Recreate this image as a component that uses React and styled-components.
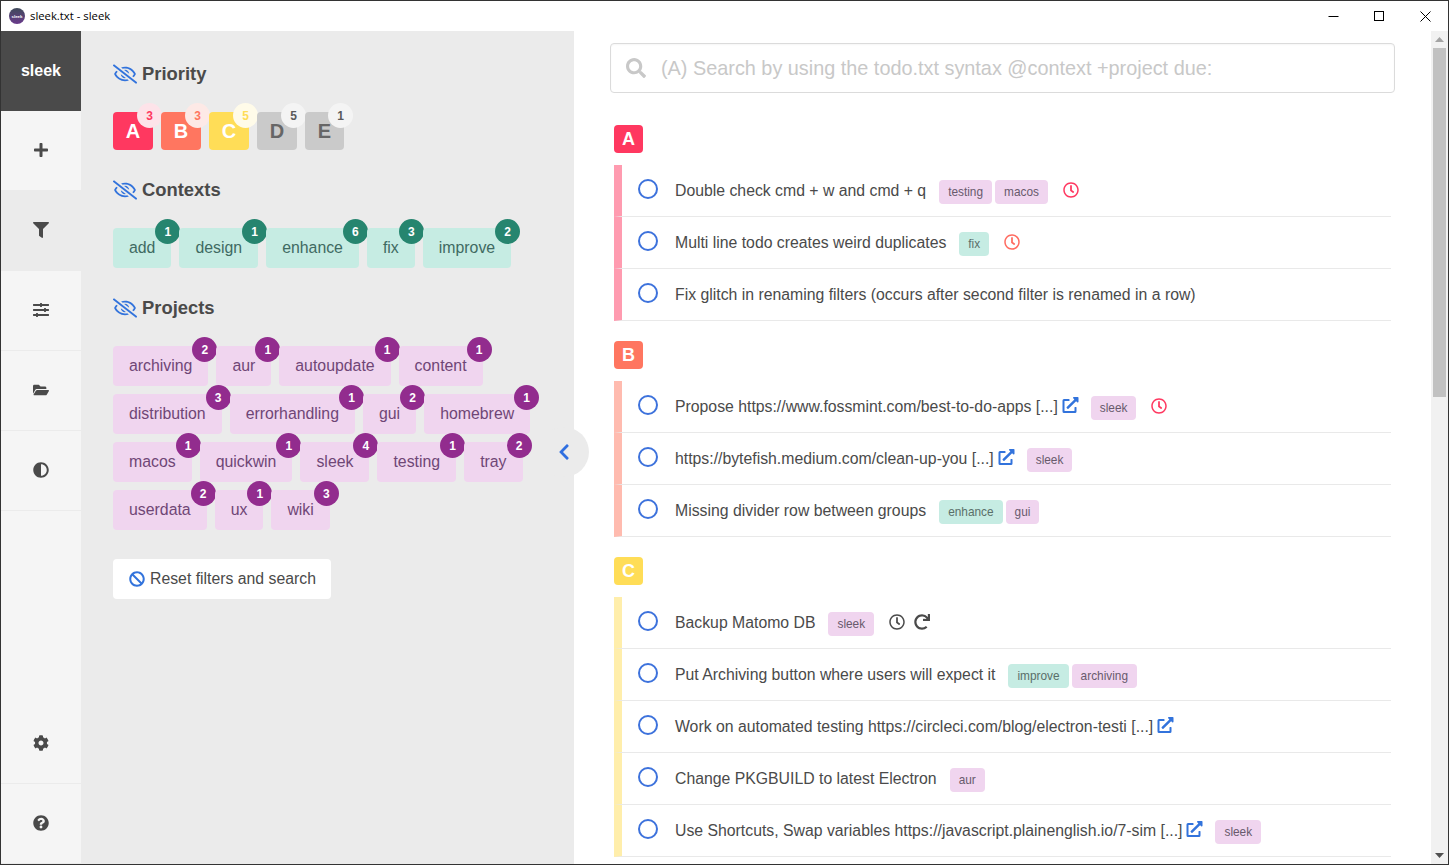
import { createGlobalStyle, styled } from "styled-components";
import {
  FaAdjust,
  FaBan,
  FaChevronLeft,
  FaCog,
  FaExternalLinkAlt,
  FaFilter,
  FaFolderOpen,
  FaPlus,
  FaQuestionCircle,
  FaRedo,
  FaRegClock,
  FaRegEyeSlash,
  FaSearch,
  FaSlidersH,
} from "react-icons/fa";

const PRIORITIES = [
  { label: "A", count: 3, bg: "#ff3860", fg: "#fff", badgeBg: "#fde3e9", badgeFg: "#ff3860" },
  { label: "B", count: 3, bg: "#ff7660", fg: "#fff", badgeBg: "#fde9e6", badgeFg: "#ff7660" },
  { label: "C", count: 5, bg: "#ffdd57", fg: "#fff", badgeBg: "#fffbe9", badgeFg: "#ffdd57" },
  { label: "D", count: 5, bg: "#cacaca", fg: "#666", badgeBg: "#f4f4f4", badgeFg: "#5a5a5a", width: 40 },
  { label: "E", count: 1, bg: "#cacaca", fg: "#666", badgeBg: "#f4f4f4", badgeFg: "#5a5a5a", width: 39 },
];

const CONTEXTS = [
  ["add", 1],
  ["design", 1],
  ["enhance", 6],
  ["fix", 3],
  ["improve", 2],
];

const PROJECTS = [
  ["archiving", 2],
  ["aur", 1],
  ["autoupdate", 1],
  ["content", 1],
  ["distribution", 3],
  ["errorhandling", 1],
  ["gui", 2],
  ["homebrew", 1],
  ["macos", 1],
  ["quickwin", 1],
  ["sleek", 4],
  ["testing", 1],
  ["tray", 2],
  ["userdata", 2],
  ["ux", 1],
  ["wiki", 3],
];

const GROUPS = [
  {
    label: "A",
    color: "#ff3860",
    bar: "#ff9bb0",
    todos: [
      {
        text: "Double check cmd + w and cmd + q",
        tags: [["testing", "project"], ["macos", "project"]],
        clock: "#ff3860",
      },
      { text: "Multi line todo creates weird duplicates", tags: [["fix", "context"]], clock: "#ff6b60" },
      { text: "Fix glitch in renaming filters (occurs after second filter is renamed in a row)" },
    ],
  },
  {
    label: "B",
    color: "#ff7660",
    bar: "#ffbbaf",
    todos: [
      {
        text: "Propose https://www.fossmint.com/best-to-do-apps [...]",
        link: true,
        tags: [["sleek", "project"]],
        clock: "#ff3860",
      },
      { text: "https://bytefish.medium.com/clean-up-you [...]", link: true, tags: [["sleek", "project"]] },
      { text: "Missing divider row between groups", tags: [["enhance", "context"], ["gui", "project"]] },
    ],
  },
  {
    label: "C",
    color: "#ffdd57",
    bar: "#ffeeab",
    todos: [
      { text: "Backup Matomo DB", tags: [["sleek", "project"]], clock: "#4a4a4a", repeat: true },
      {
        text: "Put Archiving button where users will expect it",
        tags: [["improve", "context"], ["archiving", "project"]],
      },
      { text: "Work on automated testing https://circleci.com/blog/electron-testi [...]", link: true },
      { text: "Change PKGBUILD to latest Electron", tags: [["aur", "project"]] },
      {
        text: "Use Shortcuts, Swap variables https://javascript.plainenglish.io/7-sim [...]",
        link: true,
        tags: [["sleek", "project"]],
      },
    ],
  },
];

const NAV_TOP = [
  { icon: FaPlus },
  { icon: FaFilter, active: true },
  { icon: FaSlidersH },
  { icon: FaFolderOpen },
  { icon: FaAdjust },
];

const App = () => {
  return (
    <>
      <GlobalStyle />
      <Frame>
        <TitleBar>
          <AppIcon viewBox="0 0 16 16">
            <defs>
              <linearGradient id="appIconFill" x1="0" y1="0" x2="0" y2="1">
                <stop offset="0" stopColor="#3f4a5a" />
                <stop offset="1" stopColor="#6a3a8c" />
              </linearGradient>
            </defs>
            <circle cx="8" cy="8" r="8" fill="url(#appIconFill)" />
            <text x="8" y="9.5" fontSize="4.4" fontWeight="700" fill="#fff" textAnchor="middle">
              sleek
            </text>
          </AppIcon>
          <WindowTitle>sleek.txt - sleek</WindowTitle>
          <WindowControls>
            <WindowButton>
              <svg width="11" height="11" viewBox="0 0 11 11">
                <path d="M0.5 5.5h10" stroke="#000" fill="none" />
              </svg>
            </WindowButton>
            <WindowButton>
              <svg width="11" height="11" viewBox="0 0 11 11">
                <rect x="0.5" y="0.5" width="9" height="9" stroke="#000" fill="none" />
              </svg>
            </WindowButton>
            <WindowButton>
              <svg width="11" height="11" viewBox="0 0 11 11">
                <path d="M0.5 0.5l10 10M10.5 0.5l-10 10" stroke="#000" fill="none" />
              </svg>
            </WindowButton>
          </WindowControls>
        </TitleBar>

        <Body>
          <Nav>
            <Logo>sleek</Logo>
            {NAV_TOP.map(({ icon: Icon, active }, i) => (
              <NavItem key={i} $active={active}>
                <Icon />
              </NavItem>
            ))}
            <NavSpacer />
            <NavItem>
              <FaCog />
            </NavItem>
            <NavItem>
              <FaQuestionCircle />
            </NavItem>
          </Nav>

          <FilterPanel>
            <Heading>
              <FaRegEyeSlash />
              Priority
            </Heading>
            <ChipList>
              {PRIORITIES.map((p) => (
                <PriorityChip key={p.label} $bg={p.bg} $fg={p.fg} $width={p.width}>
                  {p.label}
                  <PriorityCount $bg={p.badgeBg} $fg={p.badgeFg}>
                    {p.count}
                  </PriorityCount>
                </PriorityChip>
              ))}
            </ChipList>

            <Heading>
              <FaRegEyeSlash />
              Contexts
            </Heading>
            <ChipList>
              {CONTEXTS.map(([name, count]) => (
                <ContextChip key={name}>
                  {name}
                  <ContextCount>{count}</ContextCount>
                </ContextChip>
              ))}
            </ChipList>

            <Heading>
              <FaRegEyeSlash />
              Projects
            </Heading>
            <ChipList>
              {PROJECTS.map(([name, count]) => (
                <ProjectChip key={name}>
                  {name}
                  <ProjectCount>{count}</ProjectCount>
                </ProjectChip>
              ))}
            </ChipList>

            <ResetButton>
              <FaBan />
              Reset filters and search
            </ResetButton>

            <CollapseToggle>
              <FaChevronLeft />
            </CollapseToggle>
          </FilterPanel>

          <Main>
            <SearchBox>
              <FaSearch />
              <SearchInput placeholder="(A) Search by using the todo.txt syntax @context +project due:" />
            </SearchBox>

            {GROUPS.map((group) => (
              <Group key={group.label}>
                <GroupBadge $bg={group.color}>{group.label}</GroupBadge>
                {group.todos.map((todo) => (
                  <TodoRow key={todo.text} $bar={group.bar}>
                    <Check />
                    <TodoText>{todo.text}</TodoText>
                    {todo.link && (
                      <LinkIcon>
                        <FaExternalLinkAlt />
                      </LinkIcon>
                    )}
                    {todo.tags && (
                      <TagList $afterLink={todo.link}>
                        {todo.tags.map(([name, kind]) => (
                          <Tag key={name} $kind={kind}>
                            {name}
                          </Tag>
                        ))}
                      </TagList>
                    )}
                    {todo.clock && (
                      <StatusIcon $color={todo.clock}>
                        <FaRegClock />
                      </StatusIcon>
                    )}
                    {todo.repeat && (
                      <StatusIcon $color="#4a4a4a" $near>
                        <FaRedo />
                      </StatusIcon>
                    )}
                  </TodoRow>
                ))}
              </Group>
            ))}
          </Main>

          <Scrollbar>
            <ScrollArrow>
              <svg width="9" height="5" viewBox="0 0 9 5">
                <path d="M4.5 0L9 5H0z" fill="#a3a3a3" />
              </svg>
            </ScrollArrow>
            <ScrollThumb />
            <ScrollArrow $bottom>
              <svg width="9" height="5" viewBox="0 0 9 5">
                <path d="M0 0h9L4.5 5z" fill="#505050" />
              </svg>
            </ScrollArrow>
          </Scrollbar>
        </Body>
      </Frame>
    </>
  );
};

const GlobalStyle = createGlobalStyle`
  html, body {
    margin: 0;
    padding: 0;
    height: 100%;
    overflow: hidden;
  }
  #root {
    height: 100%;
  }
  * {
    box-sizing: border-box;
  }
`;

const Frame = styled.div`
  width: 1449px;
  height: 865px;
  display: flex;
  flex-direction: column;
  border: 1px solid #333;
  background: #fff;
  overflow: hidden;
  font-family: "Liberation Sans", Arial, sans-serif;
  color: #4a4a4a;
`;

const TitleBar = styled.div`
  height: 30px;
  flex: none;
  display: flex;
  align-items: center;
  padding-left: 8px;
  background: #fff;
`;

const AppIcon = styled.svg`
  width: 16px;
  height: 16px;
  margin-right: 5px;
`;

const WindowTitle = styled.span`
  padding-bottom: 1px;
  font-family: "Open Sans", sans-serif;
  font-size: 11.3px;
  color: #000;
`;

const WindowControls = styled.div`
  margin-left: auto;
  display: flex;
  height: 100%;
`;

const WindowButton = styled.div`
  width: 46px;
  display: flex;
  align-items: center;
  justify-content: center;
`;

const Body = styled.div`
  flex: 1;
  min-height: 0;
  display: flex;
`;

const Nav = styled.nav`
  width: 80px;
  flex: none;
  display: flex;
  flex-direction: column;
  background: #f5f5f5;
`;

const Logo = styled.div`
  height: 80px;
  flex: none;
  display: flex;
  align-items: center;
  justify-content: center;
  background: #4a4a4a;
  color: #fff;
  font-size: 16px;
  font-weight: 700;
`;

const NavItem = styled.div`
  height: 80px;
  flex: none;
  padding-bottom: 1px;
  display: flex;
  align-items: center;
  justify-content: center;
  border-bottom: 1px solid #ebebeb;
  background: ${(p) => (p.$active ? "#ebebeb" : "transparent")};
  color: #4a4a4a;
  font-size: 16px;

  svg {
    width: 16px;
    height: 16px;
  }
`;

const NavSpacer = styled.div`
  flex: 1;
`;

const FilterPanel = styled.aside`
  position: relative;
  z-index: 1;
  width: 493px;
  flex: none;
  padding: 27px 32px 0;
  background: #ebebeb;
`;

const Heading = styled.h3`
  height: 30px;
  margin: 0 0 24px;
  padding-top: 1px;
  display: flex;
  align-items: center;
  font-size: 18.4px;
  font-weight: 700;
  color: #4a4a4a;

  svg {
    width: 24px;
    height: 20px;
    margin-right: 5px;
    color: #3273dc;
  }
`;

const ChipList = styled.div`
  display: flex;
  flex-wrap: wrap;
  gap: 8px;
  margin-bottom: 24px;
`;

const PriorityChip = styled.div`
  position: relative;
  width: ${(p) => p.$width || 40}px;
  height: 38px;
  display: flex;
  align-items: center;
  justify-content: center;
  border-radius: 4px;
  background: ${(p) => p.$bg};
  color: ${(p) => p.$fg};
  font-size: 20px;
  font-weight: 700;
`;

const Count = styled.span`
  position: absolute;
  top: -9px;
  right: -9px;
  width: 25px;
  height: 25px;
  display: flex;
  align-items: center;
  justify-content: center;
  border-radius: 50%;
  font-size: 12px;
  font-weight: 700;
`;

const PriorityCount = styled(Count)`
  background: ${(p) => p.$bg};
  color: ${(p) => p.$fg};
`;

const Chip = styled.div`
  position: relative;
  height: 40px;
  padding: 0 16px;
  display: flex;
  align-items: center;
  border-radius: 4px;
  font-size: 15.85px;
`;

const ContextChip = styled(Chip)`
  background: #c6ece3;
  color: #3f6a62;
`;

const ContextCount = styled(Count)`
  background: #26856f;
  color: #fff;
`;

const ProjectChip = styled(Chip)`
  background: #f0d5ef;
  color: #6f4676;
`;

const ProjectCount = styled(Count)`
  background: #922c8e;
  color: #fff;
`;

const ResetButton = styled.button`
  width: 218px;
  height: 40px;
  margin-top: 29px;
  padding: 0 0 0 16px;
  display: flex;
  align-items: center;
  border: none;
  border-radius: 4px;
  background: #fff;
  color: #4a4a4a;
  font-family: inherit;
  font-size: 15.8px;

  svg {
    width: 16px;
    height: 16px;
    margin-right: 5px;
    color: #3273dc;
  }
`;

const CollapseToggle = styled.div`
  position: absolute;
  top: 396px;
  left: 458px;
  width: 50px;
  height: 50px;
  display: flex;
  align-items: center;
  justify-content: center;
  border-radius: 50%;
  background: #ebebeb;
  color: #2f6fe0;

  svg {
    width: 18px;
    height: 18px;
  }
`;

const Main = styled.main`
  flex: 1;
  min-width: 0;
  padding: 12px 36px 0 36px;
  overflow: hidden;
`;

const SearchBox = styled.div`
  height: 50px;
  margin-bottom: 32px;
  display: flex;
  align-items: center;
  padding-left: 15px;
  border: 1px solid #dbdbdb;
  border-radius: 4px;
  box-shadow: inset 0 1px 2px rgba(10, 10, 10, 0.04);
  color: #c8c8c8;

  svg {
    width: 20px;
    height: 20px;
    flex: none;
    margin-right: 15px;
  }
`;

const SearchInput = styled.input`
  flex: 1;
  min-width: 0;
  border: none;
  outline: none;
  padding: 0;
  background: transparent;
  font-family: inherit;
  font-size: 19.85px;
  color: #4a4a4a;

  &::placeholder {
    color: #c8c8c8;
    opacity: 1;
  }
`;

const Group = styled.section`
  margin: 0 4px 20px 4px;
`;

const GroupBadge = styled.div`
  width: 29px;
  height: 28px;
  margin-bottom: 12px;
  display: flex;
  align-items: center;
  justify-content: center;
  border-radius: 4px;
  background: ${(p) => p.$bg};
  color: #fff;
  font-size: 18px;
  font-weight: 700;
`;

const TodoRow = styled.div`
  height: 52px;
  padding: 14px 0 0 16px;
  display: flex;
  align-items: flex-start;
  border-left: 8px solid ${(p) => p.$bar};
  border-bottom: 1px solid #e9e9e9;
  font-size: 15.8px;
`;

const Check = styled.span`
  width: 20px;
  height: 20px;
  flex: none;
  margin-right: 17px;
  border: 2px solid #3d72dc;
  border-radius: 50%;
`;

const TodoText = styled.span`
  line-height: 24px;
  white-space: nowrap;
`;

const LinkIcon = styled.span`
  height: 20px;
  margin-left: 4px;
  display: flex;
  align-items: center;
  color: #3273dc;

  svg {
    width: 17px;
    height: 16px;
  }
`;

const TagList = styled.div`
  margin-left: ${(p) => (p.$afterLink ? 12 : 13)}px;
  display: flex;
  gap: 3px;
  padding-top: 1px;
`;

const Tag = styled.span`
  height: 24px;
  padding: 0 9px;
  display: flex;
  align-items: center;
  border-radius: 4px;
  background: ${(p) => (p.$kind === "context" ? "#c6ece3" : "#f0d5ef")};
  font-size: 11.85px;
  color: ${(p) => (p.$kind === "context" ? "#5a6f69" : "#685a6c")};
`;

const StatusIcon = styled.span`
  height: 22px;
  margin-left: ${(p) => (p.$near ? 9 : 15)}px;
  display: flex;
  align-items: center;
  color: ${(p) => p.$color};

  svg {
    width: 16px;
    height: 16px;
  }
`;

const Scrollbar = styled.div`
  width: 17px;
  flex: none;
  display: flex;
  flex-direction: column;
  background: #f1f1f1;
`;

const ScrollArrow = styled.div`
  height: 17px;
  flex: none;
  margin-top: ${(p) => (p.$bottom ? "auto" : 0)};
  display: flex;
  align-items: center;
  justify-content: center;
`;

const ScrollThumb = styled.div`
  height: 349px;
  flex: none;
  margin: 0 2px;
  background: #c1c1c1;
`;

export default App;
